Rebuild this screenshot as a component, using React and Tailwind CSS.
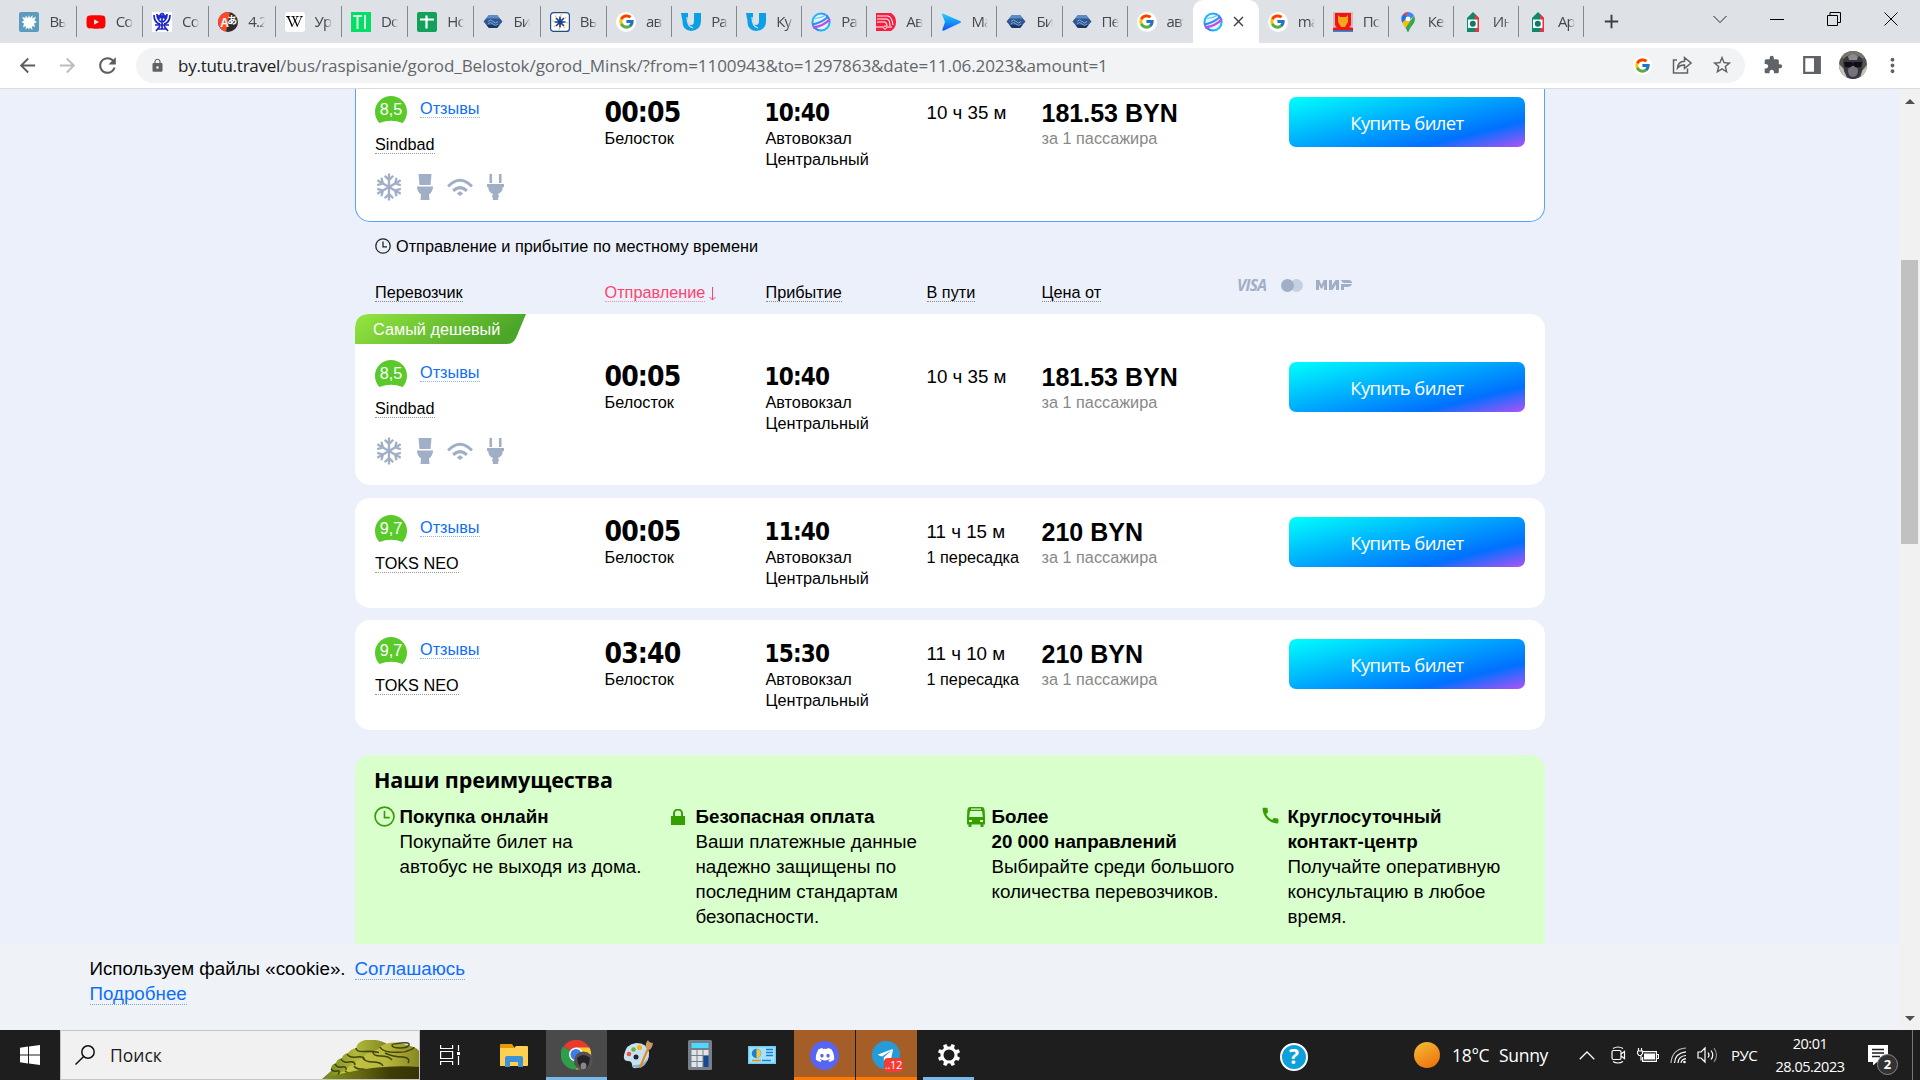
import React from "react";
import { FcGoogle } from "react-icons/fc";
import { FaYoutube, FaWikipediaW, FaDiscord, FaTelegramPlane } from "react-icons/fa";
import { MdArrowBack, MdArrowForward, MdRefresh, MdLock, MdStarBorder, MdExtension, MdMoreVert, MdAdd, MdClose, MdCall } from "react-icons/md";

/* ---------- favicons ---------- */
const Coat = () => (
  <svg viewBox="0 0 20 20" className="size-5">
    <rect width="20" height="20" rx="2" fill="#5b9bbd" />
    <path d="M10 3l1 3L13.500 3v3.500L17 4.500l-1.500 4L18 10l-3 1.500L16 15l-3-1 .4 4-2.600-2.500L10 18l-1.200-2.500L6.500 17.500l.4-3.500L4 15.500l1-4L2.500 10l2.500-1.600L3 5l3.500 1L6.500 3.500 9 6z" fill="#fff" />
  </svg>
);
const YouTube = () => (
  <span className="relative flex size-5 items-center justify-center">
    <FaYoutube className="size-5 text-[#f00]" />
  </span>
);
const Eagle = () => (
  <svg viewBox="0 0 20 20" className="size-5">
    <rect width="20" height="20" fill="#fff" />
    <g fill="none" stroke="#1a26c9" strokeWidth="1.700">
      <path d="M2 3c0 5 2 8 6 9M18 3c0 5-2 8-6 9M5 2c0 4 1 6 4 8M15 2c0 4-1 6-4 8M10 3v14M4 19l4-5M16 19l-4-5M3 13h14M5 17h10" />
      <circle cx="10" cy="3.500" r="1.800" />
      <circle cx="7" cy="5" r="1.200" />
      <circle cx="13" cy="5" r="1.200" />
    </g>
  </svg>
);
const Abby = () => (
  <span className="relative flex size-5 overflow-hidden rounded-full bg-[#2b2b2b] text-white">
    <svg viewBox="0 0 20 20" className="absolute inset-0 size-5">
      <path d="M12 0H0v20h8z" fill="#ff4a26" />
    </svg>
    <span className="absolute left-[2px] top-[4px] text-[12px]/[15px] font-bold font-['Liberation_Sans']">A</span>
    <span className="absolute left-[9px] top-[2px] text-[10px]/[12px] font-bold font-['Noto_Sans_CJK_JP',sans-serif]">あ</span>
  </span>
);
const Wiki = () => (
  <span className="flex size-5 items-center justify-center rounded-[3px] bg-white">
    <FaWikipediaW className="size-[17px] text-black" />
  </span>
);
const TopIcon = () => (
  <svg viewBox="0 0 20 20" className="size-5">
    <rect width="20" height="20" fill="#06dd66" />
    <path d="M2 4h9M6.500 4v13M14 3v14" stroke="#d4ffe4" strokeWidth="2" fill="none" />
  </svg>
);
const Sheets = () => (
  <svg viewBox="0 0 20 20" className="size-5">
    <rect width="20" height="20" rx="2" fill="#12a05a" />
    <path d="M3 7.500h14M9.500 3.500v13" stroke="#fff" strokeWidth="2.200" />
  </svg>
);
const Hex = () => (
  <svg viewBox="0 0 20 20" className="size-5">
    <path d="M6 3h8l5.500 6.500L14 16H6L.5 9.500z" fill="#2d5795" />
    <path d="M6 3h8l3 3.500H3z" fill="#5d8cc4" />
    <path d="M3.500 13h13L14 16H6z" fill="#1c3565" />
    <path d="M5 9.500q2.500-3 5 0t5 0M5 12q2.500-3 5 0t5 0" stroke="#86a8d8" fill="none" />
  </svg>
);
const Star = () => (
  <svg viewBox="0 0 20 20" className="size-5">
    <rect x=".6" y=".6" width="18.800" height="18.800" rx="3" fill="#fff" stroke="#244a8f" strokeWidth="1.200" />
    <circle cx="10" cy="10" r="7" fill="none" stroke="#efc93d" strokeWidth="1.500" strokeDasharray="1.500 4" />
    <g stroke="#1d3f8c" strokeWidth="1.700">
      <path d="M10 4.500v11M4.500 10h11M6 6l8 8M14 6l-8 8" />
    </g>
    <circle cx="10" cy="10" r="2.500" fill="#1d3f8c" />
  </svg>
);
const Google = () => (
  <span className="flex size-5 items-center justify-center rounded-full bg-white">
    <FcGoogle className="size-[17px]" />
  </span>
);
const Busfor = () => (
  <svg viewBox="0 0 20 20" className="size-5">
    <path d="M0 1h7v8q0 4 3 4t3-4V1h7v8q0 9-10 10Q1 18 1.500 9z" fill="#0aa0e6" />
    <path d="M6 5c0 7 2 10 6 11" stroke="#dfe1e5" strokeWidth="1.200" fill="none" />
  </svg>
);
const Tutu = () => (
  <svg viewBox="0 0 20 20" className="size-5">
    <defs>
      <linearGradient id="tutuRing" x1="0" y1="0" x2="1" y2="1">
        <stop offset="0" stopColor="#1fd0fb" />
        <stop offset=".55" stopColor="#2b7cf6" />
        <stop offset="1" stopColor="#0fe3f5" />
      </linearGradient>
    </defs>
    <circle cx="10" cy="10" r="8.600" fill="#e6f3ff" stroke="url(#tutuRing)" strokeWidth="2" />
    <path d="M1 12.500Q10 11 17 5" stroke="#2f8bfa" strokeWidth="2" fill="none" />
    <path d="M2 15.500Q13 14 19 7" stroke="#c04fe6" strokeWidth="2.300" fill="none" />
    <path d="M4 6.500Q10 6 15 3" stroke="#5ac8fa" strokeWidth="1.200" fill="none" />
  </svg>
);
const AvBus = () => (
  <svg viewBox="0 0 20 20" className="size-5">
    <path d="M0 1h15q5 3 5 9t-5 9H0z" fill="#f71f3f" />
    <path d="M1 4h11q4 1 5 9M1 7h10q3 1 3 7M1 10h8q2 1 2 4M0 15h7M11 15h5" stroke="#fff" strokeWidth="1.100" fill="none" />
    <circle cx="9" cy="15.500" r="1.500" fill="none" stroke="#fff" />
  </svg>
);
const Play = () => (
  <svg viewBox="0 0 20 20" className="size-5">
    <defs>
      <linearGradient id="playFill" x1="0" y1="0" x2="0" y2="1">
        <stop offset="0" stopColor="#22d0ff" />
        <stop offset="1" stopColor="#0b55f5" />
      </linearGradient>
    </defs>
    <path d="M1 2.500Q1 1 3 2l16 7q2 1 0 2L3 18.500q-2 .6-1.500-1.500L4 10z" fill="url(#playFill)" />
  </svg>
);
const MinskCoat = () => (
  <svg viewBox="0 0 20 20" className="size-5">
    <path d="M0 0h20v16H0z" fill="#d9b9b2" />
    <path d="M2 1h16v12q-2 4-8 5-6-1-8-5z" fill="#f31418" />
    <path d="M5 3l2 2h6l2-2v7l-3 5h-4l-3-5z" fill="#f6a715" />
    <path d="M0 16q5-2 10 1 5-3 10-1v4H0z" fill="#f31418" />
    <path d="M0 18.500h20V20H0z" fill="#1197e6" />
  </svg>
);
const MapsPin = () => (
  <svg viewBox="0 0 20 20" className="size-5">
    <path d="M10 0a6.800 6.800 0 0 0-5.200 2.400L10 7z" fill="#ea4335" />
    <path d="M10 0a7 7 0 0 1 6 3.500L10 10 7 5z" fill="#4285f4" />
    <path d="M4.800 2.400C2.700 5 3 8.500 4.500 11L10 5z" fill="#1a73e8" />
    <path d="M4.500 11l5-6 4 4-6 7q-2-2.500-3-5z" fill="#fbbc04" />
    <path d="M16 3.500c2 4 .6 7-1.500 9.500-2 2.600-3 4-3.500 6q-1 2-2 0-.6-2-1.500-3z" fill="#34a853" />
    <circle cx="10" cy="6.800" r="2.400" fill="#fff" />
  </svg>
);
const House = () => (
  <svg viewBox="0 0 20 20" className="size-5">
    <path d="M10 0l6 6v14H4V6z" fill="#0b8a70" />
    <path d="M12 2l4 4v14h-4z" fill="#e8343f" />
    <path d="M5 7.500h9.500V16H5z" fill="#f4fbf8" />
    <circle cx="9.800" cy="11.800" r="3" fill="#0b7a68" />
  </svg>
);

const leftTabs = [
  [Coat, "Вы"], [YouTube, "Со"], [Eagle, "Со"], [Abby, "4.2"], [Wiki, "Ур"], [TopIcon, "Do"], [Sheets, "Но"], [Hex, "Би"], [Star, "Вы"],
];
const midTabs = [
  [Google, "авт"], [Busfor, "Ра"], [Busfor, "Ку"], [Tutu, "Ра"], [AvBus, "Ав"], [Play, "Ма"], [Hex, "Би"], [Hex, "Пе"], [Google, "авт"],
];
const rightTabs = [
  [Google, "ma"], [MinskCoat, "По"], [MapsPin, "Ке"], [House, "Ин"], [House, "Ар"],
];

function Tab({ icon: Icon, label, wide, last }) {
  return (
    <div className={`flex h-[31px] shrink-0 items-center ${wide ? "w-[66.3px]" : "w-[65.07px]"} ${last ? "" : "border-r border-[#85888d]"}`}>
      <span className="ml-[9px] flex size-5 shrink-0"><Icon /></span>
      <span className="ml-[10px] w-[17px] overflow-hidden whitespace-nowrap text-[15px] tracking-[-0.8px] text-[#45484d] [mask-image:linear-gradient(to_right,black_65%,transparent)]">{label}</span>
    </div>
  );
}

function TabStrip() {
  return (
    <div className="flex h-[43px] shrink-0 items-center bg-[#dee1e6] pl-[10.4px] font-['Open_Sans',sans-serif]">
      {leftTabs.map(([I, t], i) => <Tab key={i} icon={I} label={t} wide />)}
      {midTabs.map(([I, t], i) => <Tab key={i} icon={I} label={t} last={i === midTabs.length - 1} />)}
      <div className="flex h-full w-[66px] shrink-0 items-center rounded-t-[10px] bg-white">
        <span className="ml-[10px] flex"><Tutu /></span>
        <MdClose className="ml-[7px] size-[17px] text-[#3c4043]" />
      </div>
      {rightTabs.map(([I, t], i) => <Tab key={i} icon={I} label={t} />)}
      <MdAdd className="ml-[16px] size-[23px] text-[#3c4043]" />
      <div className="ml-auto mb-[6px] flex items-center gap-[43px] pr-[22px]">
        <svg viewBox="0 0 14 14" className="size-[14px]"><path d="M.5 4L7 10.500 13.500 4" fill="none" stroke="#222" /></svg>
        <svg viewBox="0 0 14 14" className="size-[14px]"><path d="M0 7.500h14" stroke="#000" /></svg>
        <svg viewBox="0 0 14 14" className="size-[14px]"><path d="M.5 3.500h10v10H.5zM3 3.500V.5h10.500v10H11" fill="none" stroke="#000" /></svg>
        <svg viewBox="0 0 14 14" className="size-[14px]"><path d="M.5.5l13 13M13.500.5l-13 13" stroke="#000" /></svg>
      </div>
    </div>
  );
}

function Toolbar() {
  return (
    <div className="flex h-[46px] shrink-0 items-center border-b border-[#d9dbdd] bg-white pb-[1px]">
      <MdArrowBack className="ml-[16px] size-[23px] text-[#5a5e63]" />
      <MdArrowForward className="ml-[17px] size-[23px] text-[#babcbe]" />
      <MdRefresh className="ml-[16px] size-[25px] text-[#5a5e63]" />
      <div className="ml-[16px] flex h-[35px] w-[1609px] shrink-0 items-center rounded-full bg-[#f1f3f4]">
        <MdLock className="ml-[14px] size-[15px] text-[#5f6368]" />
        <span className="ml-[13px] whitespace-nowrap pt-px text-[17px] tracking-[-0.07px] text-[#63676c] font-['Open_Sans',sans-serif]">
          <span className="tracking-[-0.25px] text-[#202124]">by.tutu.travel</span>/bus/raspisanie/gorod_Belostok/gorod_Minsk/?from=1100943&amp;to=1297863&amp;date=11.06.2023&amp;amount=1
        </span>
        <span className="ml-auto flex size-[19px] items-center justify-center rounded-full bg-white"><FcGoogle className="size-[17px]" /></span>
        <svg viewBox="0 0 20 20" className="ml-[20px] size-5" fill="none" stroke="#5f6368" strokeWidth="1.500">
          <path d="M5 5H1.500v13h14v-4.500" />
          <path d="M5.500 13Q6 6.500 12.500 6.200V2.500L19 8l-6.500 5.500V10Q8 9.800 5.500 13z" />
        </svg>
        <MdStarBorder className="ml-[19px] mr-[12px] size-[22px] text-[#5f6368]" />
      </div>
      <MdExtension className="ml-[18px] size-[20px] text-[#5f6368]" />
      <svg viewBox="0 0 18 18" className="ml-[20px] size-[18px]"><path d="M1.200 1.200h15.600v15.600H1.200z" fill="none" stroke="#5f6368" strokeWidth="2.200" /><path d="M11 1h6v16h-6z" fill="#5f6368" /></svg>
      <svg viewBox="0 0 28 28" className="ml-[18px] size-[28px]">
        <defs><clipPath id="avatarClip"><circle cx="14" cy="14" r="14" /></clipPath></defs>
        <g clipPath="url(#avatarClip)">
          <path d="M0 0h28v28H0z" fill="#55544f" />
          <path d="M0 0h28v7H0z" fill="#77766c" />
          <path d="M0 13l6 6 2 9H0zM28 14l-5 6-2 8h7z" fill="#c4c3bb" />
          <path d="M4 11q1-7 10-7t10 7l-1 9q-3 8-9 8T5 20z" fill="#3a3742" />
          <path d="M9 5q5-3 10 0l-1 4h-8z" fill="#8d8a92" />
          <ellipse cx="14" cy="20" rx="5" ry="6" fill="#77727e" />
          <path d="M5 11h8l1 1.500L15 11h8l-1 5-5 .5-3-2-3 2-5-.5z" fill="#100e14" />
        </g>
      </svg>
      <MdMoreVert className="ml-[14px] size-[23px] text-[#5f6368]" />
    </div>
  );
}

/* ---------- timetable ---------- */
const Snow = () => (
  <svg viewBox="0 0 26 28" className="h-[28px] w-[26px]" fill="none" stroke="#a0afc6" strokeWidth="2.300">
    {[0, 60, 120, 180, 240, 300].map((a) => (
      <g key={a} transform={`rotate(${a} 13 14)`}>
        <path d="M13 14V.5M8.800 2.800L13 7l4.200-4.200" />
      </g>
    ))}
  </svg>
);
const Toilet = () => (
  <svg viewBox="0 0 16 26" className="h-[26px] w-[16px]" fill="#a0afc6">
    <path d="M1.500 0h13l-1 11H2.500zM0 12.500h16q0 5-4 8l.5 5.500h-9L4 20.500q-4-3-4-8z" />
  </svg>
);
const Wifi = () => (
  <svg viewBox="0 0 26 18" className="h-[18px] w-[26px]" fill="none" stroke="#a0afc6" strokeWidth="3">
    <path d="M1 8.500Q13-4 25 8.500M6.200 12.800q6.800-6.500 13.600 0" />
    <path d="M13 13.300l3.200 2.200L13 18l-3.200-2.500z" fill="#a0afc6" stroke="none" />
  </svg>
);
const Plug = () => (
  <svg viewBox="0 0 17 26" className="h-[26px] w-[17px]" fill="#a0afc6">
    <path d="M2.500 0H5v9H2.500zM12 0h2.500v9H12zM0 10h17v3h-1.200q0 5-4.600 7v1.500H12V23h-.8v3H5.800v-3H5v-1.500h.8V20q-4.600-2-4.600-7H0z" />
  </svg>
);

function Rating({ value }) {
  return (
    <span className="relative flex h-[29px] w-8 shrink-0 justify-center">
      <svg viewBox="0 0 32 29" className="absolute inset-0 h-[29px] w-8"><path d="M4.500 28A16 16 0 1 1 27.500 28Q16 23.500 4.500 28z" fill="#5aca2b" /></svg>
      <span className="relative text-[16.25px]/[29px] text-white">{value}</span>
    </span>
  );
}

const dotted = "block w-fit border-b border-dotted leading-[18px]";

function Trip({ trip }) {
  return (
    <div className="grid grid-cols-[229.500px_161px_161px_115px_247.500px_236px] pl-5 text-[16.25px] text-black">
      <div>
        <div className="flex h-[29px]">
          <Rating value={trip.rating} />
          <a className={`${dotted} ml-[13px] mt-[4px] h-[19px] border-[#8cb6ee] text-[#0d6efd]`}>Отзывы</a>
        </div>
        <div className="mt-[11px] flex h-[19px]"><span className={`${dotted} border-[#999]`}>{trip.carrier}</span></div>
        {trip.amenities && (
          <div className="mt-[18px] flex h-[30px] items-center pl-[1px]">
            <Snow />
            <span className="ml-[15px] flex"><Toilet /></span>
            <span className="ml-[14px] flex"><Wifi /></span>
            <span className="ml-[14px] flex"><Plug /></span>
          </div>
        )}
      </div>
      <div className="pt-[3px]">
        <div className="font-['DejaVu_Sans_Condensed','DejaVu_Sans'] text-[28px]/[30px] font-bold tracking-[-0.85px] [font-stretch:condensed]">{trip.dep}</div>
        <div className="leading-[21.25px]">Белосток</div>
      </div>
      <div className="pt-[3px]">
        <div className="-ml-px pt-px font-['DejaVu_Sans_Condensed','DejaVu_Sans'] text-[24px]/[29px] font-bold tracking-[-0.8px] [font-stretch:condensed]">{trip.arr}</div>
        <div className="leading-[21.25px]">Автовокзал<br />Центральный</div>
      </div>
      <div className="pt-[3px]">
        <div className="text-[18.75px]/[30px]">{trip.time}</div>
        <div className="whitespace-nowrap leading-[21.25px]">{trip.change}</div>
      </div>
      <div className="pt-[3px]">
        <div className="text-[25px]/[30px] font-bold">{trip.price}</div>
        <div className="leading-[21.25px] text-[#888]">за 1 пассажира</div>
      </div>
      <button className="mt-[2.500px] h-[50px] w-[236px] rounded-[7px] bg-[linear-gradient(166deg,#00fffc_0%,#0070ff_76%,#b052f5_100%)] pt-[2px] text-[18.500px] tracking-[-0.6px] text-white font-['Open_Sans',sans-serif]">Купить билет</button>
    </div>
  );
}

const sindbad = { rating: "8,5", carrier: "Sindbad", dep: "00:05", arr: "10:40", time: "10 ч 35 м", price: "181.53 BYN", amenities: true };
const toks1 = { rating: "9,7", carrier: "TOKS NEO", dep: "00:05", arr: "11:40", time: "11 ч 15 м", change: "1 пересадка", price: "210 BYN" };
const toks2 = { rating: "9,7", carrier: "TOKS NEO", dep: "03:40", arr: "15:30", time: "11 ч 10 м", change: "1 пересадка", price: "210 BYN" };

function ColumnHeads() {
  return (
    <div className="mt-[20px] grid h-[38px] grid-cols-[229.500px_161px_161px_115px_195.500px_1fr] pl-5 pt-[7px] text-[16.25px] text-black">
      <div><span className={`${dotted} border-[#888]`}>Перевозчик</span></div>
      <div className="flex items-start text-[#ff4270]">
        <span className={`${dotted} border-[#ff8eaa]`}>Отправление</span>
        <svg viewBox="0 0 7 14" className="ml-[4px] mt-[4px] h-[14px] w-[7px]"><path d="M3.500 0v13M.5 10l3 3 3-3" fill="none" stroke="#ff4270" /></svg>
      </div>
      <div><span className={`${dotted} border-[#888]`}>Прибытие</span></div>
      <div><span className={`${dotted} border-[#888]`}>В пути</span></div>
      <div><span className={`${dotted} border-[#888]`}>Цена от</span></div>
      <div className="-mt-[5px] flex h-[14px] items-center text-[#a0afc6]">
        <span className="w-[31px] text-[15.500px]/[14px] font-bold italic tracking-[-0.7px] font-['Open_Sans',sans-serif]">VISA</span>
        <svg viewBox="0 0 22 13" className="ml-[13px] h-[13px] w-[22px]"><circle cx="15.500" cy="6.500" r="6.500" fill="#c5d0e1" /><circle cx="6.500" cy="6.500" r="6.500" fill="#a0afc6" /></svg>
        <svg viewBox="0 0 36 10" className="ml-[13px] h-[10px] w-[36px]" fill="#a0afc6">
          <path d="M0 10V0h3.400l2.100 5L7.600 0H11v10H8V4.500L6.300 8.500H4.700L3 4.500V10z" />
          <path d="M13 10V0h3v5.500L19.500 0H23v10h-3V4.500L16.500 10z" />
          <path d="M25 4h11q-1 3-5 3h-3v3h-3zM25 0h7q4 0 4 3H28q-2 0-3-3z" />
        </svg>
      </div>
    </div>
  );
}

function ClockIcon({ className, color }) {
  return (
    <svg viewBox="0 0 20 20" className={className} fill="none" stroke={color} strokeWidth="1.600">
      <circle cx="10" cy="10" r="9" />
      <path d="M10 4.500v6.500h5" />
    </svg>
  );
}
const BusIcon = () => (
  <svg viewBox="0 0 18 20" className="h-5 w-[18px]" fill="#379e00">
    <path fillRule="evenodd" d="M3 0h12q2.500 0 2.700 4l.3 7v6.500h-1.500V20h-3v-2.500h-9V20h-3v-2.500H0V11l.3-7Q.5 0 3 0zM4 1.500v1.200h10V1.500zM3 4L2.200 10h13.600L15 4zM2 13v2h3v-2zM13 13v2h3v-2z" />
  </svg>
);
const LockIcon = () => (
  <svg viewBox="0 0 14 16" className="h-4 w-[14px]"><path d="M0 7h14v9H0z" fill="#379e00" /><path d="M3 8V4.500a4 4 0 0 1 8 0V8" fill="none" stroke="#379e00" strokeWidth="2" /></svg>
);

const benefits = [
  { icon: <ClockIcon className="-ml-px size-[21px]" color="#379e00" />, title: ["Покупка онлайн"], text: ["Покупайте билет на", "автобус не выходя из дома."] },
  { icon: <LockIcon />, title: ["Безопасная оплата"], text: ["Ваши платежные данные", "надежно защищены по", "последним стандартам", "безопасности."] },
  { icon: <BusIcon />, title: ["Более", "20 000 направлений"], text: ["Выбирайте среди большого", "количества перевозчиков."] },
  { icon: <MdCall className="-ml-[3px] -mt-[2px] size-[21px] text-[#379e00]" />, title: ["Круглосуточный", "контакт-центр"], text: ["Получайте оперативную", "консультацию в любое", "время."] },
];

function Benefits() {
  return (
    <div className="mt-[25px] h-[200px] shrink-0 rounded-t-[15px] bg-[#d9ffcc] pl-5 text-black">
      <h2 className="-ml-px pt-[9px] text-[21.5px]/[31px] font-bold tracking-[-0.12px] font-['Open_Sans',sans-serif]">Наши преимущества</h2>
      <div className="mt-[9px] grid grid-cols-[repeat(4,296px)] text-[18.75px]/[25px]">
        {benefits.map((b, i) => (
          <div key={i} className="flex">
            <span className="flex h-[25px] w-[25px] shrink-0 items-center">{b.icon}</span>
            <div className="-ml-[0.5px] whitespace-nowrap">
              {b.title.map((t) => <div key={t} className="font-bold">{t}</div>)}
              {b.text.map((t) => <div key={t}>{t}</div>)}
            </div>
          </div>
        ))}
      </div>
    </div>
  );
}

function CookieBar() {
  return (
    <div className="absolute inset-x-0 bottom-0 h-[86px] bg-[#eff3f8] pl-[89.500px] pt-[12px] text-[18.75px]/[25px] text-black">
      <div className="flex h-[25px]">
        <span>Используем файлы «cookie».</span>
        <a className="ml-[9px] h-[24px] border-b border-dotted border-[#7aa8dd] text-[#0d6efd]">Соглашаюсь</a>
      </div>
      <div className="flex h-[25px]"><a className="h-[24px] border-b border-dotted border-[#7aa8dd] text-[#0d6efd]">Подробнее</a></div>
    </div>
  );
}

function Page() {
  return (
    <div className="flex h-[941px] shrink-0 overflow-hidden bg-[#ebf0fa] font-['Liberation_Sans',Arial,sans-serif]">
      <div className="relative flex h-full flex-1 justify-start overflow-hidden">
        <div className="ml-[355px] flex w-[1190px] flex-col">
          <div className="h-[133px] shrink-0 rounded-b-[15px] border border-t-0 border-[#55a3fa] bg-white pt-[5.500px]"><div className="-ml-px"><Trip trip={sindbad} /></div></div>
          <div className="mt-[14px] flex h-[20px] shrink-0 items-center pl-5 text-[16.25px] text-black">
            <ClockIcon className="size-[16px]" color="#222" />
            <span className="ml-[5px] whitespace-nowrap">Отправление и прибытие по местному времени</span>
          </div>
          <ColumnHeads />
          <div className="relative h-[171px] shrink-0 rounded-[15px] bg-white pt-[45px]">
            <div className="absolute left-0 top-0 h-[30px] w-[171px]">
              <svg viewBox="0 0 171 30" className="absolute inset-0 h-[30px] w-[171px]">
                <defs><linearGradient id="tagFill" x1="0" y1="0" x2="1" y2=".25"><stop offset="0" stopColor="#94e63f" /><stop offset="1" stopColor="#4ba528" /></linearGradient></defs>
                <path d="M15 0H171L161 24q-3 6-9 6H0V15Q0 0 15 0z" fill="url(#tagFill)" />
              </svg>
              <span className="relative ml-[18px] whitespace-nowrap text-[16.25px]/[30px] text-white">Самый дешевый</span>
            </div>
            <Trip trip={sindbad} />
          </div>
          <div className="mt-[13px] h-[110px] shrink-0 rounded-[15px] bg-white pt-[16px]"><Trip trip={toks1} /></div>
          <div className="mt-[12px] h-[110px] shrink-0 rounded-[15px] bg-white pt-[16px]"><Trip trip={toks2} /></div>
          <Benefits />
        </div>
        <CookieBar />
      </div>
      <div className="flex w-[21px] shrink-0 flex-col items-center bg-[#f1f1f1]">
        <svg viewBox="0 0 10 6" className="mt-[9px] h-[6px] w-[10px]"><path d="M0 6l5-5 5 5z" fill="#505050" /></svg>
        <div className="mt-[156px] h-[284px] w-[17px] bg-[#c1c1c1]" />
        <svg viewBox="0 0 10 6" className="mb-[8px] mt-auto h-[6px] w-[10px]"><path d="M0 0l5 5 5-5z" fill="#505050" /></svg>
      </div>
    </div>
  );
}

/* ---------- taskbar ---------- */
const Hills = () => (
  <svg viewBox="0 0 98 39" className="h-[39px] w-[98px]">
    <defs>
      <linearGradient id="hillA" x1="0" y1="0" x2="1" y2="0"><stop offset="0" stopColor="#6f7f1a" /><stop offset=".5" stopColor="#b2b83c" /><stop offset="1" stopColor="#7c831f" /></linearGradient>
      <linearGradient id="hillC" x1="0" y1="0" x2="1" y2="0"><stop offset="0" stopColor="#c6c84c" /><stop offset=".6" stopColor="#b9b73c" /><stop offset="1" stopColor="#878722" /></linearGradient>
      <linearGradient id="hillB" x1="0" y1="0" x2="1" y2="0"><stop offset="0" stopColor="#7e9a1c" /><stop offset=".4" stopColor="#66660f" /><stop offset=".7" stopColor="#3e3d07" /><stop offset="1" stopColor="#353304" /></linearGradient>
    </defs>
    <path d="M1 39L10 31V28q1-4 5-5 1-4 6-5 1-4 6-5 3-4 8-5 1-6 9-8 14-2 25 6v32z" fill="url(#hillA)" />
    <path d="M16 39q-1-6 8-8 2-5 9-6 1-5 9-7 2-5 10-7 6-1 8-5 10-6 22-2 14 3 16 7v28z" fill="url(#hillC)" />
    <g fill="none" stroke="#3f470a" strokeWidth="1.500">
      <path d="M35 8q0 4 8 3.500t15 1M26 14q2 4 10 3t7 3M20 19q2 4 8 3t6 3M14 24q2 4 7 3t4 3M10 29q2 3 6 2t1 4" />
      <path d="M52 12q0 4 8 4t11 4M42 18q2 4 10 4t10 4M33 26q2 3 7 3t6 2M24 31q3 2 5 3" />
      <path d="M59 7q2 4 10 5 14 1 17-1 7-2 7-4M64 13q8 4 18 4 8 1 5 6M71 5q0 3 8 3t9-3-8-2-9 2" />
    </g>
    <path d="M1 39q22-7 50-11 28-3 47-1v12z" fill="url(#hillB)" />
  </svg>
);
const TaskView = () => (
  <svg viewBox="0 0 20 20" className="size-5" fill="none" stroke="#fff" strokeWidth="1.200">
    <path d="M.6 0v3.500h12V0M.6 6.500h12v7H.6zM.6 20v-3.500h12V20M18.500 0v6M18.500 11v9" />
    <path d="M17 7h3v3h-3z" fill="#fff" stroke="none" />
  </svg>
);
const Folder = () => (
  <svg viewBox="0 0 28 24" className="h-6 w-7">
    <path d="M0 2q0-1 1-1h11l2 3v5H0z" fill="#e39a06" />
    <path d="M0 5h14l2-2h11q1 0 1 1v18q0 1-1 1H0z" fill="#ffcf52" />
    <path d="M5 24v-9q0-2 2-2h14q2 0 2 2v9h-5v-5h-8v5z" fill="#3b92da" />
  </svg>
);
const Chrome = () => (
  <svg viewBox="0 0 32 32" className="size-8">
    <path d="M15 15L2.500 7.500A15 15 0 0 1 28 8z" fill="#ea3a2e" />
    <path d="M15 15L2 7.500A15 15 0 0 0 15 30.500l6-11z" fill="#2f9e4b" />
    <path d="M15 8.500h13.500A15 15 0 0 1 15 30.500l6-11z" fill="#fcc934" />
    <circle cx="15" cy="15.500" r="7" fill="#fff" /><circle cx="15" cy="15.500" r="5.500" fill="#3c7de6" />
    <circle cx="22.500" cy="22" r="9.500" fill="#55514f" />
    <path d="M16 19q6-6 13 0l-1 5q-2 7-5 7t-6-7z" fill="#252229" />
    <ellipse cx="22.500" cy="27" rx="3" ry="3.500" fill="#88838c" />
  </svg>
);
const Paint = () => (
  <svg viewBox="0 0 30 30" className="size-[30px]">
    <path d="M13 3q11 0 13 9 1 11-9 15-8 3-8-2 0-4-4-4-5 0-4-6 2-11 12-12z" fill="#c9e1ef" />
    <path d="M13 25q10-1 12-9-1 11-10 12-5 0-6-3z" fill="#84b6d3" />
    <circle cx="6" cy="14" r="2.300" fill="#e8544a" /><circle cx="10.500" cy="9.500" r="2.300" fill="#5dba49" /><circle cx="16.500" cy="7.500" r="2.600" fill="#f4b21e" /><circle cx="13" cy="17" r="2.500" fill="#1b2630" />
    <path d="M16 27L24 8l2 1-8 19z" fill="#e48b22" /><path d="M23 8q-1-5 2-8 1 3 5 3-1 6-4 7z" fill="#c69a63" />
  </svg>
);
const Calc = () => (
  <svg viewBox="0 0 24 30" className="h-[30px] w-6">
    <rect width="24" height="30" rx="1.500" fill="#77808a" /><path d="M3.500 3h17v5h-17z" fill="#4fd8ff" />
    <g fill="#dfe5ea"><path d="M3.500 10h5v5h-5zM9.500 10h5v5h-5zM15.500 10h5v5h-5zM3.500 16h5v5h-5zM9.500 16h5v5h-5zM3.500 22h5v5h-5zM9.500 22h5v5h-5z" /></g>
    <path d="M15.500 16h5v11h-5z" fill="#144a90" />
  </svg>
);
const Panel = () => (
  <svg viewBox="0 0 28 18" className="h-[18px] w-7">
    <rect width="28" height="18" fill="#6ccdf9" /><rect x="1.500" y="1.500" width="25" height="15" fill="#a6e1fc" />
    <circle cx="8.500" cy="7.500" r="4.700" fill="#1b7fd0" /><path d="M8.500 7.500V3a4.500 4.500 0 0 1 0 9z" fill="#f7c53a" />
    <path d="M18 3.500h7M18 6.500h7M18 9.500h7" stroke="#1b7fd0" strokeWidth="1.600" /><path d="M4 14.500h9" stroke="#ef8c13" strokeWidth="1.500" /><path d="M14 14.500h9" stroke="#1b7fd0" strokeWidth="1.500" />
  </svg>
);
const Gear = () => (
  <svg viewBox="0 0 24 24" className="size-6">
    <circle cx="12" cy="12" r="7" fill="none" stroke="#fff" strokeWidth="3" />
    {[22.5, 67.5, 112.5, 157.5, 202.5, 247.5, 292.5, 337.5].map((a) => (
      <path key={a} d="M10.300.8h3.400l.5 4h-4.400z" fill="#fff" transform={`rotate(${a} 12 12)`} />
    ))}
  </svg>
);

function Taskbar() {
  return (
    <div className="flex h-[50px] shrink-0 items-stretch bg-[#1e1e1e] text-white font-['Open_Sans',sans-serif]">
      <div className="flex w-[60px] items-center justify-center">
        <svg viewBox="0 0 20 20" className="size-5" fill="#fff"><path d="M0 2.800L8 1.600v7.900H0zM9 1.500L20 0v9.500H9zM0 10.500h8v7.900l-8-1.200zM9 10.500h11V20L9 18.500z" /></svg>
      </div>
      <div className="flex w-[360px] items-center border border-[#c5c5c5] bg-[#f1f1f1] pl-[14px] text-[#1c1c1c]">
        <svg viewBox="0 0 20 20" className="size-5" fill="none" stroke="#111" strokeWidth="1.500"><circle cx="13" cy="7" r="6.200" /><path d="M8.700 11.500L.5 19.500" /></svg>
        <span className="ml-[15px] text-[17.500px]">Поиск</span>
        <span className="ml-auto self-end"><Hills /></span>
      </div>
      <div className="flex w-[60px] items-center justify-center"><TaskView /></div>
      <div className="flex w-[66px] items-center justify-center pl-px"><Folder /></div>
      <div className="flex w-[61px] items-center justify-center border-b-[3px] border-[#76b9ed] bg-[#4a4a4a] pt-[3px]"><Chrome /></div>
      <div className="flex w-[62px] items-center justify-center"><Paint /></div>
      <div className="flex w-[61px] items-center justify-center"><Calc /></div>
      <div className="flex w-[64px] items-center justify-center"><Panel /></div>
      <div className="flex w-[61px] items-center justify-center border-b-[3px] border-[#ff7800] bg-[#a55e28] pt-[3px]">
        <span className="flex size-[29px] items-center justify-center rounded-full bg-[#5865f2]"><FaDiscord className="size-[20px]" /></span>
      </div>
      <div className="relative ml-px flex w-[61px] items-center justify-center border-b-[3px] border-[#ff7800] bg-[#a55e28] pt-[3px]">
        <span className="-ml-[2px] flex size-[28px] items-center justify-center rounded-full bg-[#259cd8]"><FaTelegramPlane className="size-[17px]" /></span>
        <span className="absolute left-[28px] top-[28px] flex h-[14px] w-[19px] items-center justify-center rounded-[4px] bg-[#f23c34] text-[11px] tracking-[-0.3px]">..12</span>
      </div>
      <div className="ml-[6px] flex w-[51px] items-center justify-center border-b-[3px] border-[#76b9ed] pt-[2px]"><Gear /></div>
      <div className="ml-[306px] flex items-center pt-[3px]">
        <span className="flex size-[28px] items-center justify-center rounded-full border-[2.500px] border-white bg-[#0f9fdb] text-[21px] font-bold leading-none">?</span>
      </div>
      <div className="ml-[106px] flex items-center"><span className="size-[26px] rounded-full bg-[linear-gradient(150deg,#f3bf34,#ef6a0c)]" /></div>
      <div className="ml-[12px] flex w-[127px] items-center whitespace-nowrap text-[17.500px] tracking-[-0.3px]"><span className="w-[47px]">18°C</span>Sunny</div>
      <div className="flex items-center">
        <svg viewBox="0 0 16 9" className="h-[9px] w-4"><path d="M.7 8.300L8 1l7.300 7.300" fill="none" stroke="#fff" strokeWidth="1.300" /></svg>
        <svg viewBox="0 0 16 18" className="ml-[16px] h-[18px] w-4" fill="none" stroke="#fff" strokeWidth="1.200"><path d="M2 2.500q5-3 10 0M2 15.500q5 3 10 0" /><rect x="1" y="4.500" width="9" height="9" rx="1.500" /><path d="M10 8l3.500-2.500v7L10 10" /></svg>
        <svg viewBox="0 0 22 14" className="ml-[10px] h-[14px] w-[22px]"><path d="M5 3.600h14.400v9.800H5.600V9M20 6.500h1.500v4H20" fill="none" stroke="#fff" strokeWidth="1.200" /><path d="M7 5.500h11v6H7z" fill="#fff" /><path d="M1.500 0v2.500M4.500 0v2.500M.5 3h5v2.500l-1.500 2v5M.5 3v2.500L2 7.500h2" fill="none" stroke="#fff" strokeWidth="1.200" /></svg>
        <svg viewBox="0 0 17 17" className="ml-[11px] size-[17px]" fill="none" stroke="#fff" strokeWidth="1.200"><path d="M1 16Q2 2 16 1" opacity=".7" /><path d="M4.500 16Q5 6 16 4.800M8 16q.5-7 8-7.500M11 16q.5-3.800 5-4.300" /><circle cx="14.500" cy="15" r="1.300" fill="#fff" stroke="none" /></svg>
        <svg viewBox="0 0 21 18" className="ml-[10px] h-[18px] w-[21px]" fill="none" stroke="#fff" strokeWidth="1.200"><path d="M1 6h3l4-4v14l-4-4H1zM11 6.500q2 2.500 0 5M14 4.500q3.500 4.500 0 9" /><path d="M17 2q5 7 0 14" opacity=".5" /></svg>
        <span className="ml-[13px] w-[44px] text-[15px] tracking-[-0.5px]">РУС</span>
      </div>
      <div className="flex w-[70px] flex-col items-center justify-center whitespace-nowrap text-[14.500px]/[23px] tracking-[-0.5px]"><span>20:01</span><span>28.05.2023</span></div>
      <div className="relative ml-[23px] w-[45px] border-r border-[#777]">
        <svg viewBox="0 0 20 20" className="absolute left-0 top-[15px] size-5"><path d="M0 0h20v17H9l-4 3.500V17H0z" fill="#fff" /><path d="M4 4.500h12M4 8h12M4 11.500h8" stroke="#1e1e1e" strokeWidth="1.300" /></svg>
        <span className="absolute left-[9px] top-[24px] flex size-[21px] items-center justify-center rounded-full border border-[#888] bg-[#333] text-[13px] font-bold">2</span>
      </div>
    </div>
  );
}

export default function App() {
  return (
    <div className="flex h-[1080px] w-[1920px] flex-col overflow-hidden bg-white">
      <TabStrip />
      <Toolbar />
      <Page />
      <Taskbar />
    </div>
  );
}
